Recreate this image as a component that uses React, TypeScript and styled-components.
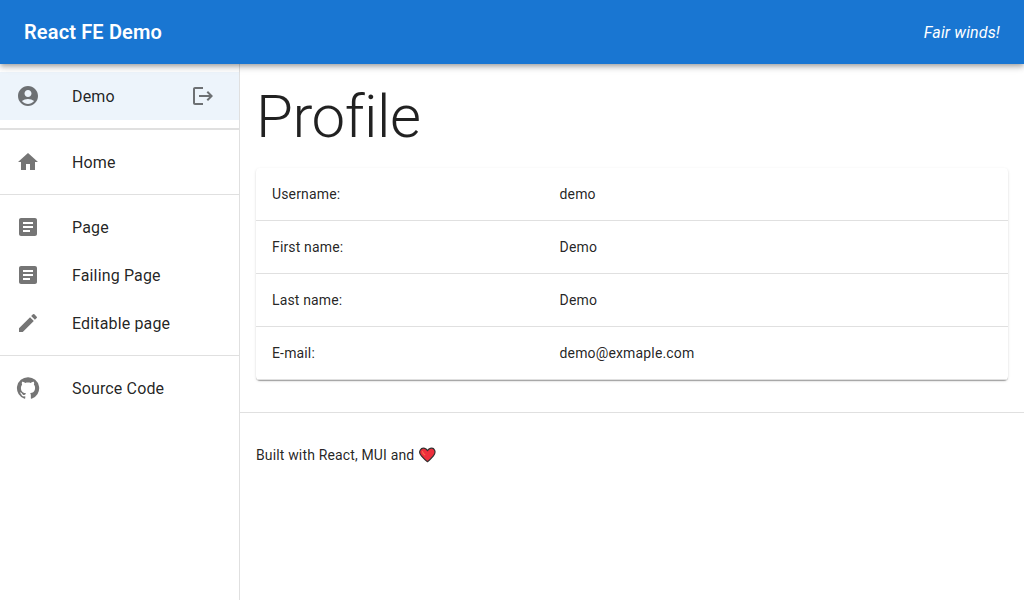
import React from "react";
import styled, { createGlobalStyle, css } from "styled-components";
import {
  MdAccountCircle,
  MdArticle,
  MdCreate,
  MdHome,
  MdLogout,
} from "react-icons/md";

const GlobalStyle = createGlobalStyle`
  *, *::before, *::after { box-sizing: border-box; }
  body {
    margin: 0;
    background: #fff;
    color: rgba(0, 0, 0, 0.87);
    font-family: Roboto, "Liberation Sans", sans-serif;
    font-size: 16px;
    line-height: 24px;
    letter-spacing: 0.00938em;
  }
`;

const Shell = styled.div`
  display: flex;
  flex-direction: column;
  min-height: 100vh;
`;

const AppBar = styled.header`
  display: flex;
  align-items: center;
  justify-content: space-between;
  min-height: 64px;
  padding: 0 24px;
  background: #1976d2;
  color: #fff;
  z-index: 1;
  box-shadow:
    0 2px 4px -1px rgba(0, 0, 0, 0.2),
    0 4px 5px 0 rgba(0, 0, 0, 0.14),
    0 1px 10px 0 rgba(0, 0, 0, 0.12);
`;

const Brand = styled.a`
  color: inherit;
  text-decoration: none;
  font-size: 20px;
  font-weight: 600;
  line-height: 32px;
  letter-spacing: 0.0075em;
`;

const Greeting = styled.em`
  padding-top: 2px;
`;

const Body = styled.div`
  display: flex;
  flex: 1;
`;

const Sidebar = styled.nav`
  flex: 0 0 240px;
  border-right: 1px solid rgba(0, 0, 0, 0.12);
`;

const NavGroup = styled.ul<{ $divider?: number }>`
  list-style: none;
  margin: 0;
  padding: 8px 0;
  border-bottom: ${(p) => p.$divider ?? 1}px solid rgba(0, 0, 0, 0.12);

  &:last-child {
    border-bottom: 0;
  }
`;

const NavRow = styled.li<{ $selected?: boolean }>`
  display: flex;
  align-items: center;
  ${(p) => p.$selected && css`background: rgba(25, 118, 210, 0.08);`}
`;

const NavLink = styled.a`
  display: flex;
  flex: 1;
  align-items: center;
  gap: 32px;
  height: 48px;
  padding: 0 16px;
  color: inherit;
  text-decoration: none;

  svg {
    flex: none;
    color: rgba(0, 0, 0, 0.54);
  }
`;

const NavLabel = styled.span`
  padding-top: 2px;
`;

const IconButton = styled.button`
  display: flex;
  margin: 0 16px 0 0;
  padding: 8px;
  border: 0;
  border-radius: 50%;
  background: none;
  color: rgba(0, 0, 0, 0.54);
  cursor: pointer;
`;

const Content = styled.div`
  flex: 1;
  min-width: 0;
`;

const Main = styled.main`
  padding: 16px 16px 32px;
`;

const Title = styled.h1`
  margin: 0 0 14px;
  font-size: 60px;
  font-weight: 300;
  line-height: 74px;
  letter-spacing: -0.00833em;
`;

const Paper = styled.div`
  border-radius: 4px;
  background: #fff;
  box-shadow:
    0 2px 1px -1px rgba(0, 0, 0, 0.2),
    0 1px 1px 0 rgba(0, 0, 0, 0.14),
    0 1px 3px 0 rgba(0, 0, 0, 0.12);
`;

const Table = styled.table`
  width: 100%;
  border-collapse: collapse;
  font-size: 14px;
  line-height: 20px;
`;

const cell = css`
  padding: 16px;
  border-bottom: 1px solid #e0e0e0;
  font-weight: 400;
  text-align: left;
`;

const Label = styled.th`
  ${cell}
`;

const Value = styled.td`
  ${cell}
`;

const Footer = styled.footer`
  display: flex;
  align-items: center;
  gap: 4px;
  padding: 32px 16px;
  border-top: 1px solid rgba(0, 0, 0, 0.12);
  font-size: 14px;
  line-height: 20px;
`;

const Heart = () => (
  <svg width="18" height="18" viewBox="0 0 18 18" role="img" aria-label="love">
    <path
      d="M9.500 15.700 C8.500 15 5 11.800 3.400 9.900 C1.600 8 1.300 5.800 2.200 4.200 C3.100 2.600 5 1.900 6.700 2.400 C8 2.800 9 3.700 9.500 4.700 C10 3.700 11 2.800 12.300 2.400 C14 1.900 15.900 2.600 16.600 4.200 C17.300 5.800 17 8 15.400 9.900 C13.800 11.800 10.500 15 9.500 15.700 Z"
      fill="#ee2f3c"
      stroke="#33302f"
      strokeWidth="1.200"
      strokeLinejoin="round"
    />
    <path d="M4.500 5.500 C4.700 7 5.500 8 6.800 8.800" fill="none" stroke="#f9694f" strokeWidth="1.200" strokeLinecap="round" />
  </svg>
);

const pages = [
  { label: "Page", icon: MdArticle },
  { label: "Failing Page", icon: MdArticle },
  { label: "Editable page", icon: MdCreate },
];

const profile = [
  ["Username:", "demo"],
  ["First name:", "Demo"],
  ["Last name:", "Demo"],
  ["E-mail:", "demo@exmaple.com"],
];

export default function App() {
  return (
    <Shell>
      <GlobalStyle />
      <AppBar>
        <Brand href="#">React FE Demo</Brand>
        <Greeting>Fair winds!</Greeting>
      </AppBar>
      <Body>
        <Sidebar>
          <NavGroup $divider={2}>
            <NavRow $selected>
              <NavLink href="#profile"><MdAccountCircle size={24} /><NavLabel>Demo</NavLabel></NavLink>
              <IconButton type="button" aria-label="Log out"><MdLogout size={24} /></IconButton>
            </NavRow>
          </NavGroup>
          <NavGroup>
            <NavRow><NavLink href="#home"><MdHome size={24} /><NavLabel>Home</NavLabel></NavLink></NavRow>
          </NavGroup>
          <NavGroup>
            {pages.map(({ label, icon: Icon }) => (
              <NavRow key={label}><NavLink href="#page"><Icon size={24} /><NavLabel>{label}</NavLabel></NavLink></NavRow>
            ))}
          </NavGroup>
          <NavGroup>
            <NavRow>
              <NavLink href="#source">
                <svg width="24" height="24" viewBox="0 0 24 24" fill="currentColor" aria-hidden="true">
                  <path d="M12 1.270a11 11 0 00-3.480 21.460c.55.09.73-.28.73-.55v-1.840c-3.030.64-3.670-1.460-3.670-1.460-.55-1.290-1.280-1.650-1.280-1.650-.92-.65.1-.65.1-.65 1.100 0 1.730 1.100 1.730 1.100.92 1.650 2.570 1.200 3.210.92a2 2 0 01.64-1.470c-2.470-.27-5.040-1.190-5.040-5.500 0-1.100.46-2.100 1.200-2.840a3.760 3.760 0 010-2.930s.91-.28 3.110 1.100c1.800-.49 3.700-.49 5.500 0 2.100-1.380 3.020-1.100 3.020-1.100a3.760 3.760 0 01.1 2.930c.83.74 1.200 1.740 1.200 2.940 0 4.210-2.570 5.130-5.040 5.400.45.37.82.92.82 2.020v3.030c0 .27.1.64.73.55A11 11 0 0012 1.270" />
                </svg>
                <NavLabel>Source Code</NavLabel>
              </NavLink>
            </NavRow>
          </NavGroup>
        </Sidebar>
        <Content>
          <Main>
            <Title>Profile</Title>
            <Paper>
              <Table>
                <tbody>
                  {profile.map(([label, value]) => (
                    <tr key={label}>
                      <Label scope="row">{label}</Label>
                      <Value>{value}</Value>
                    </tr>
                  ))}
                </tbody>
              </Table>
            </Paper>
          </Main>
          <Footer>Built with React, MUI and <Heart /></Footer>
        </Content>
      </Body>
    </Shell>
  );
}
